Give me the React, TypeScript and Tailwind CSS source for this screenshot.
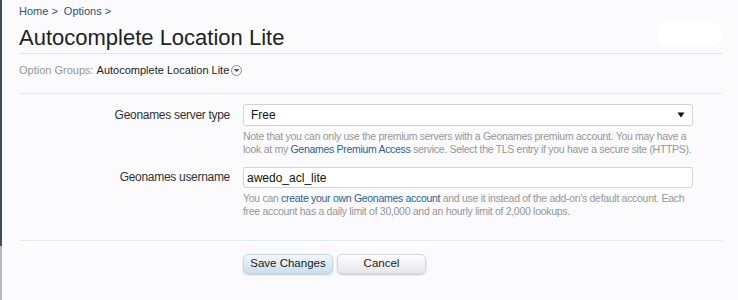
import React from 'react';

const font = { fontFamily: '"Liberation Sans", Arial, sans-serif' };

function Hint({ children }: { children: React.ReactNode }) {
  return (
    <p className="mt-[4px] whitespace-nowrap text-[10.5px] leading-[13px] tracking-[-0.3px] text-[#969696]">{children}</p>
  );
}

export default function App() {
  return (
    <div className="flex h-[300px] w-[738px] overflow-hidden bg-[#fbfbfd]" style={font}>
      <div className="flex w-[2px] flex-col">
        <div className="h-[246px] bg-[#3f4e5c]" />
        <div className="flex-1 bg-[#b5b8bc]" />
      </div>
      <div className="relative flex-1 pl-[17px] pr-[16px]">
        <div className="absolute right-[16px] top-[22px] h-[24px] w-[64px] rounded-[10px] bg-white" />
        <div className="pt-[5px] text-[11px] leading-[13px] text-[#2f5373]">
          <span>Home &gt;</span>
          <span className="ml-[6px]">Options &gt;</span>
        </div>
        <h1 className="mt-[7px] text-[22px] leading-[25px] text-[#222]">Autocomplete Location Lite</h1>
        <div className="mt-[3px] h-px bg-[#dbe6f0]" />
        <div className="mt-[10px] flex items-center text-[11px] leading-[13px] text-[#969696]">
          <span>Option Groups:</span>
          <span className="ml-[3px] text-[#222]">Autocomplete Location Lite</span>
          <span className="ml-[2px] flex h-[11px] w-[11px] items-center justify-center rounded-full border border-[#8a8a8a]">
            <svg width="7" height="5" viewBox="0 0 7 5"><path d="M0.5 1 L3.5 4 L6.5 1 Z" fill="#555" /></svg>
          </span>
        </div>
        <div className="mt-[16px] h-px bg-[#e3ecf3]" />

        <div className="mt-[10px] flex">
          <div className="w-[224px] pt-[4px] pr-[13px] text-right text-[12px] leading-[14px] tracking-[-0.3px] text-[#333]">
            Geonames server type
          </div>
          <div className="w-[450px]">
            <div className="flex h-[22px] items-center justify-between rounded-[3px] border border-[#d2d2d2] bg-white pl-[7px] pr-[7px] text-[12px] text-[#111]">
              <span>Free</span>
              <svg width="8" height="6" viewBox="0 0 8 6"><path d="M0.5 0.5 L7.5 0.5 L4 5.5 Z" fill="#111" /></svg>
            </div>
            <Hint>
              Note that you can only use the premium servers with a Geonames premium account. You may have a<br />
              look at my <span className="text-[#2b6195]">Genames Premium Access</span> service. Select the TLS entry if you have a secure site (HTTPS).
            </Hint>
          </div>
        </div>

        <div className="mt-[11px] flex">
          <div className="w-[224px] pt-[3px] pr-[13px] text-right text-[12px] leading-[14px] tracking-[-0.3px] text-[#333]">
            Geonames username
          </div>
          <div className="w-[450px]">
            <div className="flex h-[21px] items-center rounded-[3px] border border-[#d2d2d2] bg-white pl-[3px] text-[12px] text-[#111]">
              awedo_acl_lite
            </div>
            <Hint>
              You can <span className="text-[#2b6195]">create your own Geonames account</span> and use it instead of the add-on's default account. Each<br />
              free account has a daily limit of 30,000 and an hourly limit of 2,000 lookups.
            </Hint>
          </div>
        </div>

        <div className="mt-[22px] h-px bg-[#e0ecf0]" />

        <div className="ml-[224px] mt-[13px] flex gap-[4px]">
          <button className="h-[20px] w-[90px] rounded-[5px] border border-[#c8d4de] bg-gradient-to-b from-[#f2f7fb] to-[#c9dff0] text-[11.5px] text-[#222] shadow-[0_1px_2px_rgba(0,0,0,0.2)]">
            Save Changes
          </button>
          <button className="h-[20px] w-[89px] rounded-[5px] border border-[#d6d6dc] bg-gradient-to-b from-[#ffffff] to-[#e6e6ec] text-[11.5px] text-[#222] shadow-[0_1px_2px_rgba(0,0,0,0.2)]">
            Cancel
          </button>
        </div>
      </div>
    </div>
  );
}
